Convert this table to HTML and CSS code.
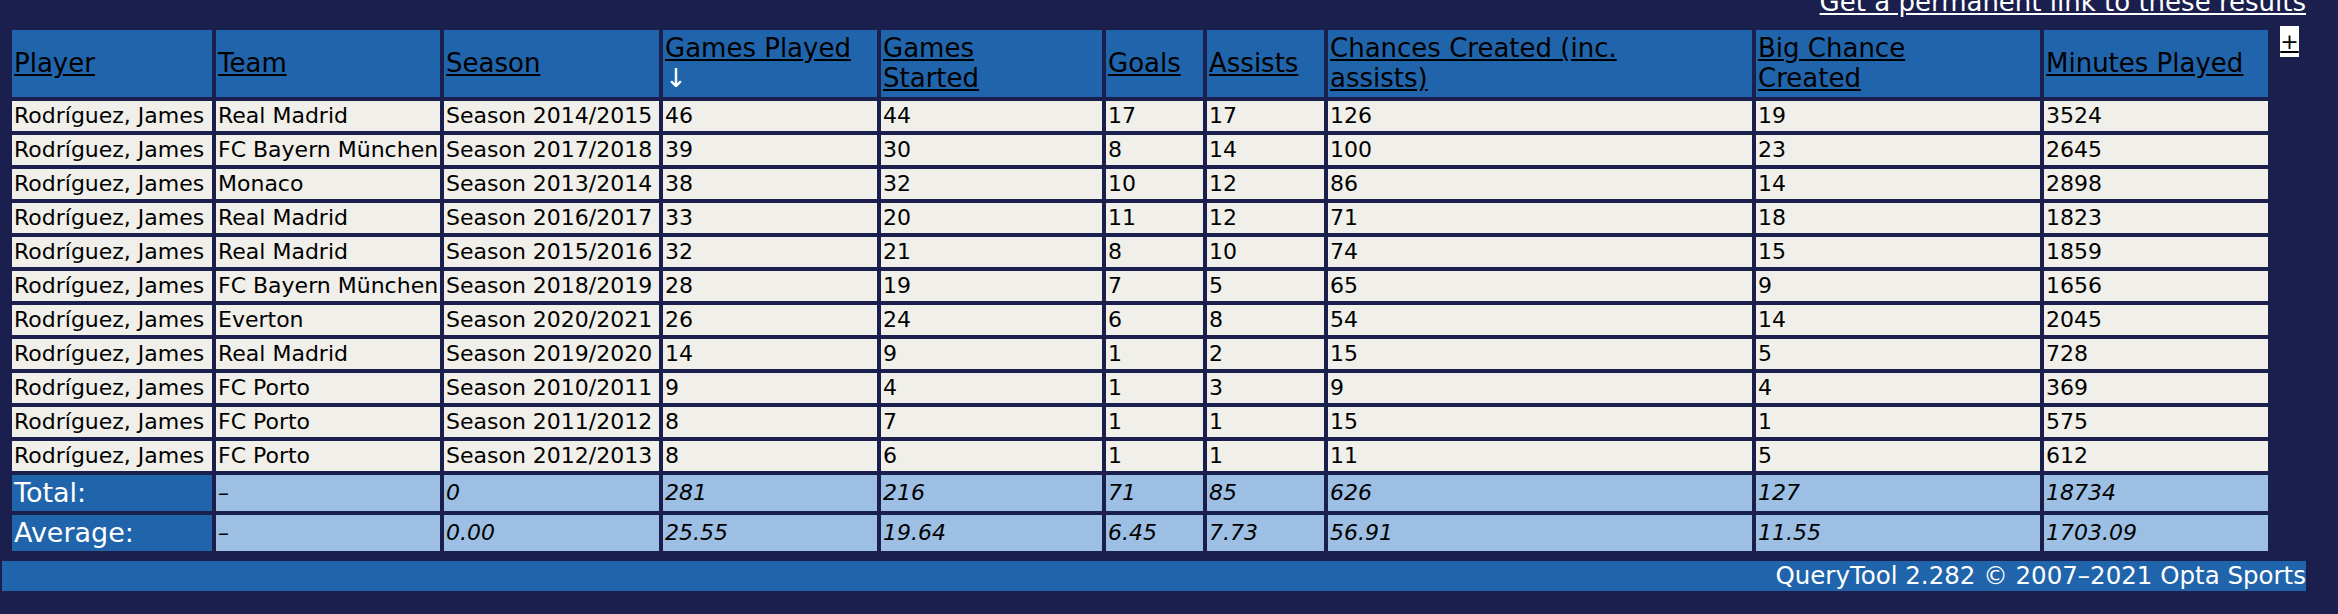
FILE: index.html
```html
<!DOCTYPE html>
<html lang="en">
<head>
<meta charset="utf-8">
<title>QueryTool results</title>
<link rel="stylesheet" href="styles.css">
</head>
<body>
<div class="page">
  <div class="permalink"><a href="#">Get a permanent link to these results</a></div>
  <div class="results">
    <table class="stats">
      <colgroup>
        <col class="c-player"><col class="c-team"><col class="c-season"><col class="c-gp"><col class="c-gs"><col class="c-goals"><col class="c-assists"><col class="c-chances"><col class="c-big"><col class="c-minutes">
      </colgroup>
      <thead>
        <tr>
          <th><a href="#">Player</a></th>
          <th><a href="#">Team</a></th>
          <th><a href="#">Season</a></th>
          <th><a href="#">Games Played</a><br><span class="sort-arrow">↓</span></th>
          <th><a href="#">Games<br>Started</a></th>
          <th><a href="#">Goals</a></th>
          <th><a href="#">Assists</a></th>
          <th><a href="#">Chances Created (inc.<br>assists)</a></th>
          <th><a href="#">Big Chance<br>Created</a></th>
          <th><a href="#">Minutes Played</a></th>
        </tr>
      </thead>
      <tbody>
        <tr><td>Rodríguez, James</td><td>Real Madrid</td><td>Season 2014/2015</td><td>46</td><td>44</td><td>17</td><td>17</td><td>126</td><td>19</td><td>3524</td></tr>
        <tr><td>Rodríguez, James</td><td>FC Bayern München</td><td>Season 2017/2018</td><td>39</td><td>30</td><td>8</td><td>14</td><td>100</td><td>23</td><td>2645</td></tr>
        <tr><td>Rodríguez, James</td><td>Monaco</td><td>Season 2013/2014</td><td>38</td><td>32</td><td>10</td><td>12</td><td>86</td><td>14</td><td>2898</td></tr>
        <tr><td>Rodríguez, James</td><td>Real Madrid</td><td>Season 2016/2017</td><td>33</td><td>20</td><td>11</td><td>12</td><td>71</td><td>18</td><td>1823</td></tr>
        <tr><td>Rodríguez, James</td><td>Real Madrid</td><td>Season 2015/2016</td><td>32</td><td>21</td><td>8</td><td>10</td><td>74</td><td>15</td><td>1859</td></tr>
        <tr><td>Rodríguez, James</td><td>FC Bayern München</td><td>Season 2018/2019</td><td>28</td><td>19</td><td>7</td><td>5</td><td>65</td><td>9</td><td>1656</td></tr>
        <tr><td>Rodríguez, James</td><td>Everton</td><td>Season 2020/2021</td><td>26</td><td>24</td><td>6</td><td>8</td><td>54</td><td>14</td><td>2045</td></tr>
        <tr><td>Rodríguez, James</td><td>Real Madrid</td><td>Season 2019/2020</td><td>14</td><td>9</td><td>1</td><td>2</td><td>15</td><td>5</td><td>728</td></tr>
        <tr><td>Rodríguez, James</td><td>FC Porto</td><td>Season 2010/2011</td><td>9</td><td>4</td><td>1</td><td>3</td><td>9</td><td>4</td><td>369</td></tr>
        <tr><td>Rodríguez, James</td><td>FC Porto</td><td>Season 2011/2012</td><td>8</td><td>7</td><td>1</td><td>1</td><td>15</td><td>1</td><td>575</td></tr>
        <tr><td>Rodríguez, James</td><td>FC Porto</td><td>Season 2012/2013</td><td>8</td><td>6</td><td>1</td><td>1</td><td>11</td><td>5</td><td>612</td></tr>
      </tbody>
      <tfoot>
        <tr><th>Total:</th><td>–</td><td>0</td><td>281</td><td>216</td><td>71</td><td>85</td><td>626</td><td>127</td><td>18734</td></tr>
        <tr><th>Average:</th><td>–</td><td>0.00</td><td>25.55</td><td>19.64</td><td>6.45</td><td>7.73</td><td>56.91</td><td>11.55</td><td>1703.09</td></tr>
      </tfoot>
    </table>
    <a class="plus" href="#">+</a>
  </div>
  <div class="footer">QueryTool 2.282 © 2007–2021 Opta Sports</div>
</div>
</body>
</html>
```
FILE: styles.css
```css
body {
  margin: 0;
  background: #1b1f4e;
  font-family: "DejaVu Sans", Verdana, sans-serif;
  color: #000;
}

.page {
  width: 2304px;
  margin-left: 2px;
}

.permalink {
  text-align: right;
  font-size: 26px;
  line-height: 30px;
  height: 30px;
  margin-top: -13px;
}

.permalink a {
  color: #fff;
}

.results {
  display: flex;
  align-items: flex-start;
  margin-top: 9px;
  margin-left: 6px;
}

.stats {
  border-collapse: separate;
  border-spacing: 4px;
  table-layout: fixed;
  width: 2264px;
  flex: none;
}

.c-player { width: 200px; }
.c-team { width: 224px; }
.c-season { width: 215px; }
.c-gp { width: 214px; }
.c-gs { width: 221px; }
.c-goals { width: 97px; }
.c-assists { width: 117px; }
.c-chances { width: 424px; }
.c-big { width: 284px; }
.c-minutes { width: 224px; }

.stats th,
.stats td {
  text-align: left;
  vertical-align: middle;
  font-weight: normal;
  padding: 2px;
  white-space: nowrap;
}

.stats thead th {
  background: #2064ab;
  font-size: 26px;
  line-height: 30px;
  padding: 3px 2px 4px;
}

.stats thead a {
  color: #000;
}

.sort-arrow {
  color: #fff;
}

.stats tbody td {
  background: #f1efe9;
  font-size: 22px;
  line-height: 26px;
}

.stats tfoot th {
  background: #2064ab;
  color: #fff;
  font-size: 27px;
  line-height: 30px;
  padding: 3px 2px;
}

.stats tfoot td {
  background: #9cbfe3;
  font-size: 22px;
  line-height: 26px;
  font-style: italic;
}

.plus {
  display: block;
  flex: none;
  margin-left: 8px;
  width: 19px;
  height: 31px;
  background: #fff;
  color: #000;
  font-size: 22px;
  line-height: 31px;
  text-align: center;
}

.footer {
  margin-top: 6px;
  background: #2064ab;
  color: #fff;
  text-align: right;
  font-size: 24.5px;
  line-height: 30px;
  height: 30px;
}
```
